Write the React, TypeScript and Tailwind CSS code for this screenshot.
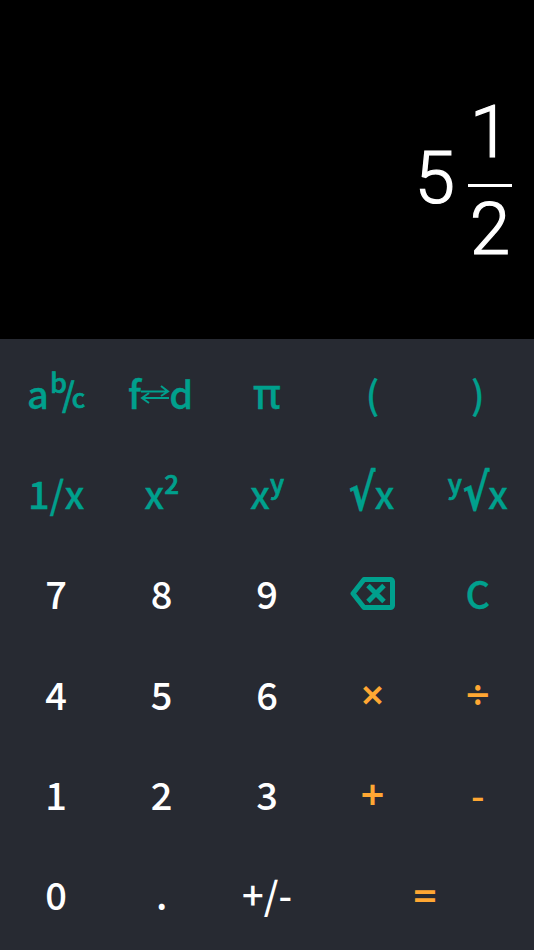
const teal = "text-[#00a08d] [-webkit-text-stroke:0.3px_#00a08d]";
const orange = "text-[#ffa733]";
const base = "flex items-center justify-center whitespace-nowrap text-[38px] leading-none font-medium";
const latin = "font-['Noto_Sans',sans-serif]";
const op = `${orange} ${latin} text-[42px] font-semibold`;
const sup = "text-[26px] [-webkit-text-stroke:0.7px_#00a08d] mb-[21px]";
const root = "font-['DejaVu_Sans',sans-serif] font-bold text-[36px] scale-y-[1.4] scale-x-[1.12]";

function Key({ className = "", children }: { className?: string; children: React.ReactNode }) {
  return <div className={`${base} ${className}`}>{children}</div>;
}

function Backspace() {
  return (
    <svg width="45" height="33" viewBox="0 0 45 33" fill="none">
      <path d="M14 2.5H40.5a2 2 0 0 1 2 2V28.5a2 2 0 0 1-2 2H14L3 16.5Z" stroke="#00a08d" strokeWidth="5" strokeLinejoin="round" />
      <path d="M18 8.5L34 24.5M34 8.5L18 24.5" stroke="#00a08d" strokeWidth="5" />
    </svg>
  );
}

function Swap() {
  return (
    <svg width="30" height="19" viewBox="0 0 30 19" fill="none" stroke="#00a08d" strokeWidth="2" className="mx-[-1px] mt-[3px]">
      <path d="M1 6.5H28M21 1L28 6.5L21 11" />
      <path d="M29 13H2M9 8L2 13L9 18" />
    </svg>
  );
}

export default function App() {
  return (
    <div className="w-[534px] h-[950px] flex flex-col bg-black font-['Noto_Sans_CJK_SC','Noto_Sans',sans-serif] overflow-hidden">
      <div className="h-[339px] flex items-center justify-end pr-[22px] text-white font-['Roboto',sans-serif] [-webkit-text-stroke:1.2px_white]">
        <div className="flex items-center gap-[13px] pt-[21px]">
          <span className="text-[73px] leading-none font-light mb-[3px]">5</span>
          <div className="flex flex-col items-center w-[44px]">
            <span className="text-[73px] leading-[80px] font-light">1</span>
            <div className="h-[3px] w-[44px] mt-[12px] mb-[2px] bg-white" />
            <span className="text-[73px] leading-[80px] font-light">2</span>
          </div>
        </div>
      </div>
      <div className="flex-1 bg-[#272a32] grid grid-cols-5 grid-rows-6 px-[3.5px] pt-[4px] pb-[6px]">
        <Key className={teal}>
          <span>a</span>
          <span className="text-[27px] [-webkit-text-stroke:0.7px_#00a08d] mb-[24px] ml-[1px]">b</span>
          <span className="text-[33px] [-webkit-text-stroke:0.7px_#00a08d] mt-[1px] mx-[-5px]">/</span>
          <span className="text-[26px] [-webkit-text-stroke:0.7px_#00a08d] mt-[8px] ml-[2px]">c</span>
        </Key>
        <Key className={teal}><span className="ml-[-2px]">f</span><Swap />d</Key>
        <Key className={`${teal} ${latin} text-[41px]`}>π</Key>
        <Key className={teal}>(</Key>
        <Key className={teal}>)</Key>

        <Key className={teal}>1/x</Key>
        <Key className={teal}>x<span className={sup}>2</span></Key>
        <Key className={teal}>x<span className={sup}>y</span></Key>
        <Key className={teal}><span className={root}>√</span>x</Key>
        <Key className={teal}><span className={`${sup} mr-[2px]`}>y</span><span className={root}>√</span>x</Key>

        <Key className="text-white">7</Key>
        <Key className="text-white">8</Key>
        <Key className="text-white">9</Key>
        <Key><Backspace /></Key>
        <Key className={teal}>C</Key>

        <Key className="text-white">4</Key>
        <Key className="text-white">5</Key>
        <Key className="text-white">6</Key>
        <Key className={op}>×</Key>
        <Key className={op}>÷</Key>

        <Key className="text-white">1</Key>
        <Key className="text-white">2</Key>
        <Key className="text-white">3</Key>
        <Key className={op}>+</Key>
        <Key className={`${orange} font-bold`}>-</Key>

        <Key className="text-white">0</Key>
        <Key className="text-white">.</Key>
        <Key className="text-white">+/-</Key>
        <Key className={`${op} col-span-2`}><span className="mt-[2px]">=</span></Key>
      </div>
    </div>
  );
}
